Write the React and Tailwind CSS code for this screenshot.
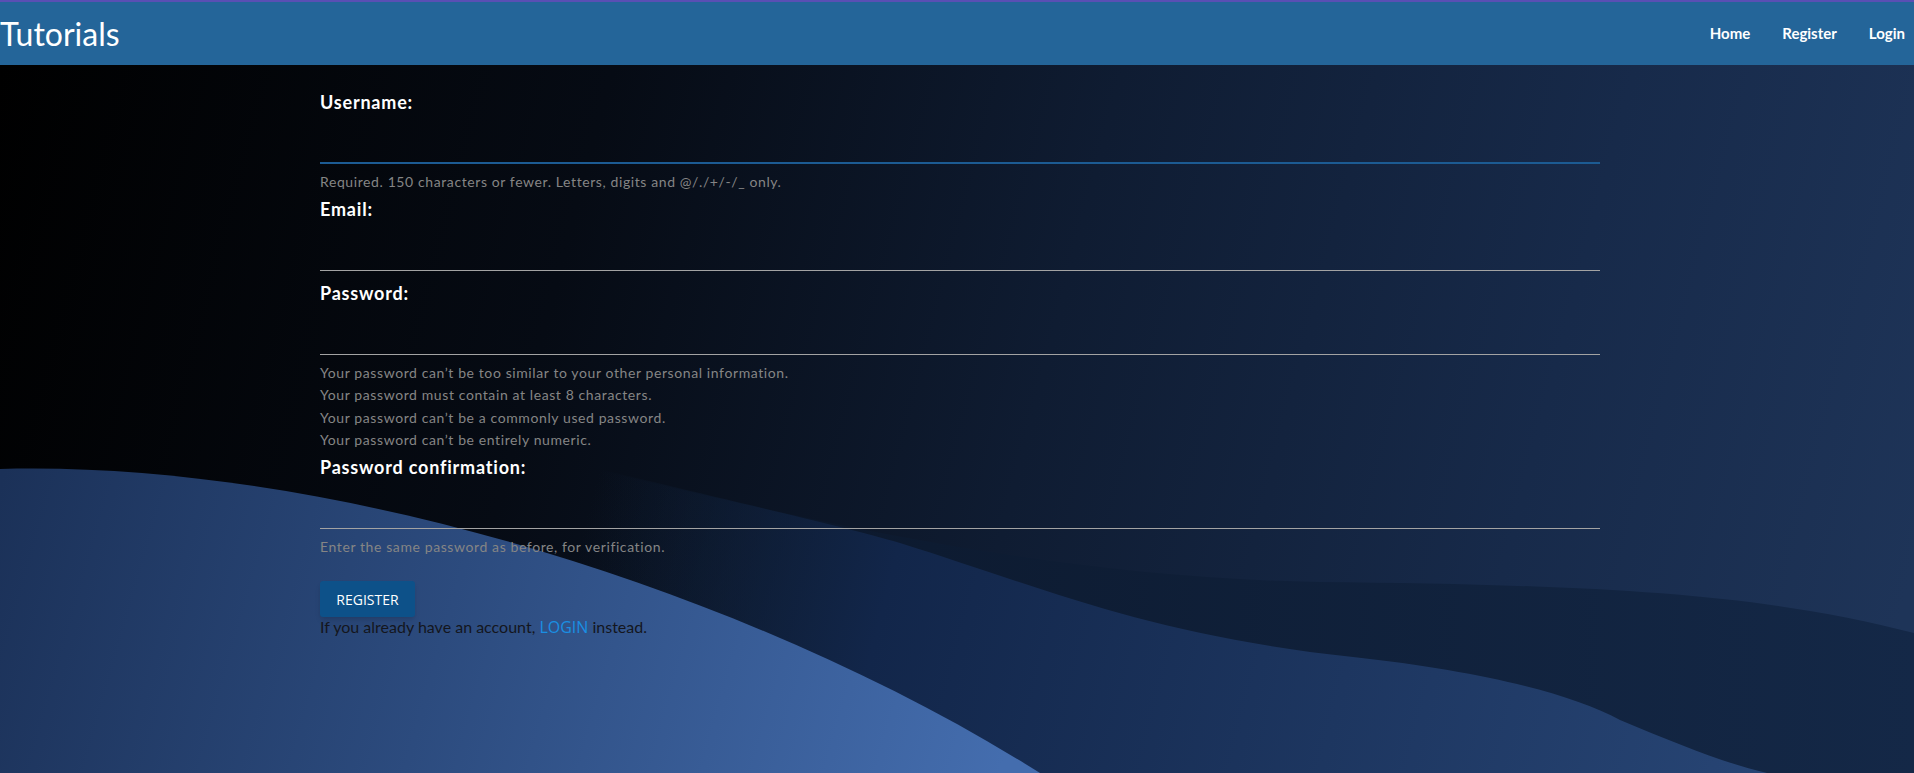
const fields = [
  {
    id: "username",
    label: "Username:",
    type: "text",
    focused: true,
    help: ["Required. 150 characters or fewer. Letters, digits and @/./+/-/_ only."],
  },
  { id: "email", label: "Email:", type: "email" },
  {
    id: "password1",
    label: "Password:",
    type: "password",
    help: [
      "Your password can’t be too similar to your other personal information.",
      "Your password must contain at least 8 characters.",
      "Your password can’t be a commonly used password.",
      "Your password can’t be entirely numeric.",
    ],
  },
  {
    id: "password2",
    label: "Password confirmation:",
    type: "password",
    help: ["Enter the same password as before, for verification."],
  },
];

const font = "font-['Lato','Open_Sans',sans-serif]";

const Waves = () => (
  <svg
    className="absolute inset-0 h-full w-full"
    viewBox="0 0 1914 708"
    preserveAspectRatio="none"
    aria-hidden="true"
  >
    <defs>
      <linearGradient id="bg" x1="0" y1="0" x2="1914" y2="500" gradientUnits="userSpaceOnUse">
        <stop offset="0" stopColor="#000000" />
        <stop offset="0.3" stopColor="#060b14" />
        <stop offset="0.55" stopColor="#0f1c32" />
        <stop offset="0.8" stopColor="#172a4a" />
        <stop offset="1" stopColor="#1e3458" />
      </linearGradient>
      <linearGradient id="band" x1="600" y1="0" x2="1914" y2="0" gradientUnits="userSpaceOnUse">
        <stop offset="0" stopColor="#0b1628" stopOpacity="0" />
        <stop offset="0.25" stopColor="#0d1b31" stopOpacity="1" />
        <stop offset="1" stopColor="#142847" />
      </linearGradient>
      <linearGradient id="mid" x1="600" y1="400" x2="1800" y2="708" gradientUnits="userSpaceOnUse">
        <stop offset="0" stopColor="#0f2038" stopOpacity="0" />
        <stop offset="0.25" stopColor="#12264a" />
        <stop offset="1" stopColor="#284676" />
      </linearGradient>
      <linearGradient id="blob" x1="0" y1="420" x2="1000" y2="708" gradientUnits="userSpaceOnUse">
        <stop offset="0" stopColor="#1b3158" />
        <stop offset="0.45" stopColor="#2c4b7e" />
        <stop offset="1" stopColor="#446dae" />
      </linearGradient>
    </defs>
    <rect width="1914" height="708" fill="url(#bg)" />
    <path
      d="M420,360 C700,430 1000,512 1320,517 C1600,520 1760,528 1914,568 L1914,708 L420,708 Z"
      fill="url(#band)"
    />
    <path
      d="M420,360 C700,430 820,455 900,478 C1050,525 1150,570 1353,592 C1480,606 1570,628 1620,655 C1680,680 1730,700 1767,708 L420,708 Z"
      fill="url(#mid)"
    />
    <path d="M0,404 C320,395 740,520 1040,708 L0,708 Z" fill="url(#blob)" />
  </svg>
);

export default function App() {
  return (
    <div className={`flex min-h-screen flex-col bg-black ${font}`}>
      <nav className="flex h-[65px] items-center justify-between border-t-2 border-[#5a4fb4] bg-[#246599] pr-[9px]">
        <a href="#" className="text-[32px] leading-none text-white">
          Tutorials
        </a>
        <ul className="flex items-center gap-[32px] text-[15px] font-bold text-white">
          <li>
            <a href="#">Home</a>
          </li>
          <li>
            <a href="#">Register</a>
          </li>
          <li>
            <a href="#">Login</a>
          </li>
        </ul>
      </nav>

      <main className="relative flex-1 overflow-hidden">
        <Waves />
        <form className="relative ml-[320px] w-[1280px] pt-[25px]">
          {fields.map((f) => (
            <div key={f.id} className={f.help ? "mb-[3px]" : "mb-[10px]"}>
              <label
                htmlFor={f.id}
                className="block text-[18px] font-bold leading-[24px] tracking-[0.8px] text-white"
              >
                {f.label}
              </label>
              <input
                id={f.id}
                type={f.type}
                className={`block h-[50px] w-full bg-transparent text-white outline-none ${
                  f.focused
                    ? "border-b-2 border-[#1c5b93]"
                    : "border-b border-[#a3a3a3]"
                }`}
              />
              {f.help && (
                <div className="mt-[7px] text-[14px] leading-[22.5px] tracking-[0.6px] text-[#858585]">
                  {f.help.map((h) => (
                    <p key={h}>{h}</p>
                  ))}
                </div>
              )}
            </div>
          ))}

          <button
            type="submit"
            className="mt-[20px] h-[36px] w-[95px] rounded-[3px] bg-[#0d5189] font-['Open_Sans',sans-serif] text-[14px] text-white shadow-md"
          >
            REGISTER
          </button>
          <p className="text-[16px] leading-[20px] text-[#14161d]">
            If you already have an account,{" "}
            <a href="#" className="font-['Open_Sans',sans-serif] text-[#1a8fe3]">
              LOGIN
            </a>{" "}
            instead.
          </p>
        </form>
      </main>
    </div>
  );
}
